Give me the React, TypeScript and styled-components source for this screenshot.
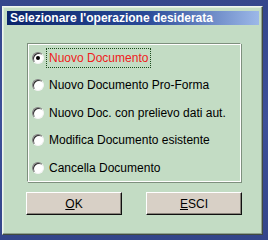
import styled, { createGlobalStyle } from 'styled-components';

const GlobalStyle = createGlobalStyle`
  html, body {
    margin: 0;
    padding: 0;
    background: #3b4c92;
  }
  body {
    width: 268px;
    height: 240px;
    overflow: hidden;
    font-family: "Liberation Sans", Arial, sans-serif;
  }
`;

const OPTIONS = [
  'Nuovo Documento',
  'Nuovo Documento Pro-Forma',
  'Nuovo Doc. con prelievo dati aut.',
  'Modifica Documento esistente',
  'Cancella Documento',
];

export default function App() {
  const selected = 0;

  return (
    <>
      <GlobalStyle />
      <S.Desktop>
        <S.Window>
          <S.TitleBar>
            <S.Title>Selezionare l'operazione desiderata</S.Title>
          </S.TitleBar>
          <S.Body>
            <S.GroupBox>
              {OPTIONS.map((label, index) => (
                <S.Option key={label}>
                  <S.Radio checked={index === selected} />
                  <S.Label focused={index === selected}>{label}</S.Label>
                </S.Option>
              ))}
            </S.GroupBox>
            <S.Buttons>
              <S.Button>
                <u>O</u>K
              </S.Button>
              <S.Button>
                <u>E</u>SCI
              </S.Button>
            </S.Buttons>
          </S.Body>
        </S.Window>
      </S.Desktop>
    </>
  );
}

const S = {
  Desktop: styled.div`
    width: 268px;
    height: 240px;
    padding: 6px 0 0 2px;
    box-sizing: border-box;
    background: linear-gradient(180deg, #34468c 0%, #3d5099 50%, #33458a 100%);
  `,
  Window: styled.div`
    width: 261px;
    height: 229px;
    box-sizing: border-box;
    display: flex;
    flex-direction: column;
    padding: 4px 3px 0 4px;
    background: #c3dcc4;
    border-top: 1px solid #eef4ee;
    border-left: 1px solid #eef4ee;
    border-right: 1px solid #404a40;
    border-bottom: 1px solid #404a40;
    box-shadow: inset -1px -1px 0 #8ea08e, inset 1px 1px 0 #dcebdc;
  `,
  TitleBar: styled.div`
    height: 14px;
    display: flex;
    align-items: center;
    padding-left: 3px;
    background: linear-gradient(90deg, #0a246a 0%, #2a4a98 55%, #9cb8e8 100%);
  `,
  Title: styled.span`
    color: #ffffff;
    font-size: 12px;
    font-weight: bold;
    line-height: 14px;
    white-space: nowrap;
  `,
  Body: styled.div`
    display: flex;
    flex-direction: column;
    padding: 18px 0 0 20px;
  `,
  GroupBox: styled.div`
    width: 214px;
    height: 139px;
    box-sizing: border-box;
    display: grid;
    grid-template-rows: 27px 28px 27px 28px 27px;
    align-content: start;
    padding: 0 0 0 4px;
    border-top: 1px solid #7e907e;
    border-left: 1px solid #7e907e;
    border-right: 1px solid #ffffff;
    border-bottom: 1px solid #ffffff;
    box-shadow: inset 1px 1px 0 #ffffff, 1px 1px 0 #7e907e;
  `,
  Option: styled.div`
    display: flex;
    align-items: center;
  `,
  Radio: styled.span<{ checked?: boolean }>`
    position: relative;
    width: 12px;
    height: 12px;
    flex: none;
    margin-right: 2px;
    box-sizing: border-box;
    border-radius: 50%;
    background: #ffffff;
    border: 1px solid;
    border-color: #808080 #f4f4f4 #f4f4f4 #808080;
    box-shadow: inset 1px 1px 0 #303030;

    &::after {
      content: '';
      display: ${({ checked }) => (checked ? 'block' : 'none')};
      position: absolute;
      left: 3px;
      top: 3px;
      width: 4px;
      height: 4px;
      border-radius: 50%;
      background: #000000;
    }
  `,
  Label: styled.span<{ focused?: boolean }>`
    padding: 2px;
    font-size: 12px;
    line-height: 14px;
    white-space: nowrap;
    color: ${({ focused }) => (focused ? '#f02020' : '#000000')};
    border: 1px dotted ${({ focused }) => (focused ? '#1a4a1a' : 'transparent')};
  `,
  Buttons: styled.div`
    display: flex;
    gap: 24px;
    margin-top: 10px;
    margin-left: -1px;
  `,
  Button: styled.button`
    width: 96px;
    height: 23px;
    padding: 0;
    box-sizing: border-box;
    font-family: "Liberation Sans", Arial, sans-serif;
    font-size: 12px;
    color: #000000;
    background: #d8d0c6;
    border: 1px solid;
    border-color: #ffffff #101010 #101010 #ffffff;
    box-shadow: inset -1px -1px 0 #8a847c;

    u {
      text-decoration-thickness: 1px;
    }
  `,
};
